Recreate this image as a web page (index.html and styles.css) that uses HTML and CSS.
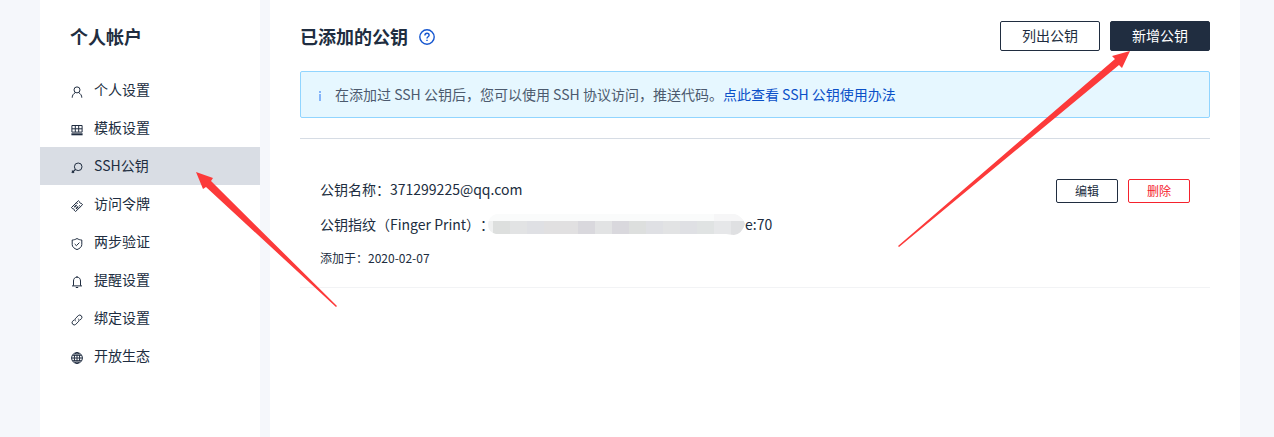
FILE: index.html
```html
<!DOCTYPE html>
<html lang="zh-CN">
<head>
<meta charset="utf-8">
<meta name="viewport" content="width=device-width, initial-scale=1">
<title>SSH公钥</title>
<link rel="stylesheet" href="styles.css">
</head>
<body>
<div class="page">
  <aside class="sidebar">
    <h2 class="sidebar-title">个人帐户</h2>
    <nav class="menu">
      <a class="menu-item" href="#"><svg class="icon" viewBox="0 0 12 12"><circle cx="6" cy="3.9" r="3"/><path d="M1.2 11.7C1.2 9.4 2.4 7.7 4.4 6.6M10.8 11.7C10.8 9.4 9.6 7.7 7.6 6.6"/></svg>个人设置</a>
      <a class="menu-item" href="#"><svg class="icon" viewBox="0 0 12 12"><path d="M.9 1.5h10.2v6.6H.9zM.9 4.8h10.2M4.3 1.5v6.6M7.7 1.5v6.6"/><path class="heavy" d="M.4 10.3h11.2"/></svg>模板设置</a>
      <a class="menu-item active" href="#"><svg class="icon" viewBox="0 0 12 12"><circle cx="7.2" cy="4.8" r="3.8"/><path class="bold" d="M4.5 7.4L.8 10.9M1 8.6l2 2.200"/></svg>SSH公钥<svg class="arrow arrow-menu" viewBox="0 0 141 135" aria-hidden="true"><path d="M0 0L17 6L15 9L141 134L140 135L10 15L7 17Z"/></svg></a>
      <a class="menu-item" href="#"><svg class="icon" viewBox="0 0 12 12"><path d="M.4 7.600L7.400.700l1.300 1.200c-.1 1 .4 1.500 1.400 1.400l1.500 1.300-7 6.900-1.400-1.300c.1-1-.4-1.500-1.400-1.400zM5.400 2.700l1.300 1.300M8.200 5.400l1.300 1.300"/><path class="bold" d="M3.300 7.200l2.300-2.200M5 8.700l2.300-2.200"/></svg>访问令牌</a>
      <a class="menu-item" href="#"><svg class="icon" viewBox="0 0 12 12"><path d="M6 .5c1.500 1 3.100 1.400 4.800 1.500v4.600c0 2.300-2 3.900-4.800 5-2.800-1.100-4.800-2.700-4.800-5V2C2.900 1.900 4.500 1.500 6 .5zM3.700 6l1.700 1.700 3-3.100"/></svg>两步验证</a>
      <a class="menu-item" href="#"><svg class="icon" viewBox="0 0 12 12"><path d="M2.500 9.700V5c0-2.300 1.300-3.800 3.500-3.800S9.500 2.700 9.500 5v4.700M1 9.900h10M6 0v1.200M4.800 11.500h2.400"/></svg>提醒设置</a>
      <a class="menu-item" href="#"><svg class="icon" viewBox="0 0 12 12"><path d="M4.700 7.300c-1-1-.9-2.200 0-3.100l2.600-2.600a2.200 2.200 0 0 1 3.100 3.100L8.800 6.300M7.300 4.700c1 1 .9 2.200 0 3.100l-2.600 2.600a2.200 2.200 0 0 1-3.100-3.100L3.200 5.700"/></svg>绑定设置</a>
      <a class="menu-item" href="#"><svg class="icon" viewBox="0 0 12 12"><circle cx="6" cy="6" r="5.400"/><ellipse cx="6" cy="6" rx="2.700" ry="5.400"/><path d="M6 .6v10.800M.6 6h10.800M1.500 3.300h9M1.500 8.700h9"/></svg>开放生态</a>
    </nav>
  </aside>
  <main class="content">
    <header class="head">
      <h1 class="title">已添加的公钥</h1>
      <a class="help" href="#" aria-label="帮助"><svg viewBox="0 0 16 16"><circle cx="8" cy="8" r="7.200"/><path d="M5.900 6.500c0-1.400.9-2.200 2.100-2.200s2.100.8 2.100 1.900C10.100 7.700 8 7.700 8 9.400M8 10.700v1.300"/></svg></a>
      <div class="actions">
        <button class="btn" type="button">列出公钥</button>
        <div class="anchor">
          <button class="btn btn-primary" type="button">新增公钥</button>
          <svg class="arrow arrow-add" viewBox="0 0 232 196" aria-hidden="true"><path d="M232 0L214 5L217 8L0 195L1 196L221 14L224 17Z"/></svg>
        </div>
      </div>
    </header>
    <div class="notice">
      <svg class="info" viewBox="0 0 4 10" aria-hidden="true"><path d="M1 0h2v2H1zM1 3h2v7H1z"/></svg>
      <p class="notice-text">在添加过 SSH 公钥后，您可以使用 SSH 协议访问，推送代码。<a class="link" href="#">点此查看 SSH 公钥使用办法</a></p>
    </div>
    <ul class="keys">
      <li class="key">
        <div class="key-info">
          <p class="line">公钥名称：371299225@qq.com</p>
          <p class="line">公钥指纹（Finger Print）：<svg class="mask" viewBox="0 0 257 21" aria-hidden="true">
            <defs><clipPath id="pill"><path d="M8 0h239q8 3 10 10q-3 10-11 11l-8-1H8q-8-2-8-10q1-8 8-10z"/></clipPath></defs>
            <g clip-path="url(#pill)">
              <path fill="#fafbfb" d="M0 0h257v21H0z"/><path fill="#f0f1f1" d="M0 7h5v14H0z"/>
              <path fill="#f6f6f7" d="M226 0h31v7h-31z"/>
              <path fill="#dddfde" d="M5 7h17v14H5zM141 7h17v14h-17z"/>
              <path fill="#e2e3e4" d="M22 7h17v14H22zM107 7h17v14h-17zM175 7h17v14h-17z"/>
              <path fill="#dfe0e4" d="M39 7h17v14H39zM158 7h17v14h-17zM192 7h17v14h-17z"/>
              <path fill="#e1e0e1" d="M56 7h34v14H56z"/>
              <path fill="#d9d8dd" d="M90 7h17v14H90zM124 7h17v14h-17z"/>
              <path fill="#e0e3e3" d="M209 7h17v14h-17z"/><path fill="#e6e7e9" d="M226 7h17v14h-17z"/><path fill="#dfe0e2" d="M243 7h14v14h-14z"/>
            </g></svg>e:70</p>
          <p class="line small">添加于：2020-02-07</p>
        </div>
        <div class="key-actions">
          <button class="btn btn-small" type="button">编辑</button>
          <button class="btn btn-small btn-danger" type="button">删除</button>
        </div>
      </li>
    </ul>
  </main>
</div>
</body>
</html>
```
FILE: styles.css
```css
* {
  box-sizing: border-box;
}

body {
  margin: 0;
  background: #f5f7fb;
  color: #202d40;
  font-family: "Noto Sans CJK SC", sans-serif;
  font-size: 14px;
  line-height: 22px;
  text-spacing-trim: space-all;
}

h1, h2, p, ul {
  margin: 0;
  padding: 0;
}

a {
  color: inherit;
  text-decoration: none;
}

.page {
  display: flex;
  gap: 10px;
  min-height: 100vh;
  padding: 0 34px 0 40px;
}

.sidebar {
  flex: 0 0 220px;
  padding-top: 21px;
  background: #fff;
}

.sidebar-title,
.title {
  font-size: 18px;
  line-height: 30px;
  font-weight: 700;
}

.sidebar-title {
  padding-left: 30px;
}

.menu {
  display: flex;
  flex-direction: column;
  padding-top: 20px;
}

.menu-item {
  position: relative;
  display: flex;
  align-items: center;
  gap: 11px;
  height: 38px;
  padding: 0 0 2px 31px;
}

.menu-item.active {
  background: #d9dde4;
}

.icon {
  width: 12px;
  height: 12px;
  margin-top: 6px;
  fill: none;
  stroke: #202d40;
  stroke-width: 1;
}

.bold {
  stroke-width: 1.3;
}

.heavy {
  stroke-width: 2;
}

.content {
  flex: 1;
  min-width: 0;
  padding: 21px 30px;
  background: #fff;
}

.head {
  display: flex;
  align-items: center;
}

.help {
  display: flex;
  margin: 2px 0 0 11px;
}

.help svg {
  width: 16px;
  height: 16px;
  fill: none;
  stroke: #1556d0;
  stroke-width: 1.4;
}

.actions {
  display: flex;
  gap: 10px;
  margin-left: auto;
}

.anchor {
  position: relative;
}

.btn {
  display: block;
  width: 100px;
  height: 30px;
  padding: 0 0 2px;
  border: 1px solid #202d40;
  border-radius: 2px;
  background: #fff;
  color: #202d40;
  font: inherit;
  line-height: 26px;
}

.btn-primary {
  background: #202d40;
  color: #fff;
}

.btn-small {
  width: 62px;
  height: 24px;
  padding: 0;
  font-size: 12px;
  line-height: 22px;
}

.btn-danger {
  border-color: #f5222d;
  color: #f5222d;
}

.notice {
  display: flex;
  align-items: center;
  gap: 13px;
  margin-top: 20px;
  padding: 11px 17px 12px;
  border: 1px solid #91d5ff;
  border-radius: 2px;
  background: #e6f7ff;
  color: #4c5a6e;
}

.info {
  width: 4px;
  height: 10px;
  margin-top: 4px;
  fill: #85b5fa;
}

.link {
  color: #0a50c8;
}

.keys {
  margin-top: 20px;
  border-top: 1px solid #d6dce4;
  list-style: none;
}

.key {
  display: flex;
  justify-content: space-between;
  align-items: flex-start;
  padding: 39px 20px 19px;
  border-bottom: 1px solid #f2f3f5;
}

.key-info {
  display: flex;
  flex-direction: column;
  gap: 13px;
}

.line {
  display: flex;
  align-items: center;
}

.small {
  font-size: 12px;
  line-height: 20px;
}

.mask {
  width: 257px;
  height: 21px;
  margin-left: -6px;
}

.key-actions {
  display: flex;
  gap: 10px;
  margin-top: 1px;
}

.arrow {
  position: absolute;
  z-index: 1;
  fill: #fc3a3a;
  pointer-events: none;
}

.arrow-menu {
  top: 25px;
  left: 156px;
  width: 141px;
  height: 135px;
}

.arrow-add {
  top: 30px;
  right: 80px;
  width: 232px;
  height: 196px;
}
```
